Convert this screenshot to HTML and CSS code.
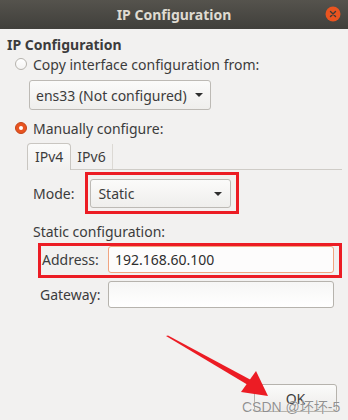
FILE: index.html
```html
<!DOCTYPE html>
<html lang="en">
<head>
    <meta charset="UTF-8">
    <meta name="viewport" content="width=device-width, initial-scale=1.0">
    <title>IP Configuration</title>
    <link rel="stylesheet" href="styles.css">
</head>
<body>

<div class="window">
    <header class="titlebar">
        <span class="title">IP Configuration</span>
        <span class="close">
            <svg width="16" height="16" viewBox="0 0 16 16">
                <circle cx="8" cy="8" r="7.5" fill="#e95420"/>
                <path d="M5.5 5.5 L10.5 10.5 M10.5 5.5 L5.5 10.5" stroke="#3c3b37" stroke-width="1.4" stroke-linecap="round"/>
            </svg>
        </span>
    </header>

    <main class="content">
        <h1 class="heading">IP Configuration</h1>

        <div class="radio-row">
            <span class="radio"></span>
            <span>Copy interface configuration from:</span>
        </div>
        <div class="combo combo-iface">
            <span>ens33 (Not configured)</span>
            <span class="caret"></span>
        </div>

        <div class="radio-row">
            <span class="radio checked"></span>
            <span>Manually configure:</span>
        </div>

        <div class="tabs">
            <span class="tab active">IPv4</span>
            <span class="tab">IPv6</span>
        </div>

        <div class="mode-row">
            <span class="label">Mode:</span>
            <div class="mark mark-mode">
                <div class="combo combo-mode">
                    <span>Static</span>
                    <span class="caret"></span>
                </div>
            </div>
        </div>

        <div class="section-label">Static configuration:</div>

        <div class="field mark mark-address">
            <span class="label label-address">Address:</span>
            <div class="entry focused">192.168.60.100</div>
        </div>
        <div class="field">
            <span class="label label-gateway">Gateway:</span>
            <div class="entry"></div>
        </div>

        <div class="actions">
            <button class="ok">OK</button>
        </div>
    </main>

    <!-- annotation arrow drawn on top of the screenshot -->
    <svg class="note-arrow" width="348" height="420" viewBox="0 0 348 420">
        <polygon points="166,336 168,335.5 251,380 248,385" fill="#ec1c24"/>
        <polygon points="268,396 241,392 256,371" fill="#ec1c24"/>
    </svg>
    <span class="watermark">CSDN @坏坏-5</span>
</div>

</body>
</html>
```

FILE: styles.css
```css
*{
    margin: 0px;
    padding: 0px;
    box-sizing: border-box;
}
body{
    width: 348px;
    height: 420px;
    overflow: hidden;
    background: #f2f1f0;
    font-family: "Noto Sans", "DejaVu Sans", sans-serif;
    font-size: 14px;
    color: #3c3c3c;
}
.window{
    position: relative;
    height: 420px;
}
.titlebar{
    height: 29px;
    background: linear-gradient(#55534d, #403f3b);
    display: flex;
    align-items: center;
    justify-content: center;
    position: relative;
}
.title{
    color: #dfdbd2;
    font-weight: bold;
    font-size: 14px;
}
.close{
    position: absolute;
    right: 7px;
    top: 6px;
    height: 16px;
}
.content{
    padding: 7px 6px 0 7px;
    display: flex;
    flex-direction: column;
}
.heading{
    font-size: 14px;
    font-weight: bold;
    line-height: 18px;
    color: #3c3c3c;
}
.radio-row{
    display: flex;
    align-items: center;
    gap: 6px;
    height: 20px;
    padding-left: 8px;
}
.radio{
    width: 12px;
    height: 12px;
    border-radius: 50%;
    border: 1px solid #b6b3ad;
    background: linear-gradient(#ffffff, #f4f3f2);
}
.radio.checked{
    border-color: #c4461a;
    background: #e95420;
    display: flex;
    align-items: center;
    justify-content: center;
}
.radio.checked::after{
    content: "";
    width: 4px;
    height: 4px;
    border-radius: 50%;
    background: #fff;
}
.combo{
    display: flex;
    align-items: center;
    justify-content: space-between;
    border: 1px solid #bdbab5;
    border-radius: 3px;
    background: linear-gradient(#fbfbfa, #efeeec);
    color: #3c3c3c;
}
.combo-iface{
    width: 182px;
    height: 30px;
    margin: 6px 0 8px 22px;
    padding: 0 7px 0 6px;
}
.caret{
    width: 0;
    height: 0;
    border-left: 4px solid transparent;
    border-right: 4px solid transparent;
    border-top: 4px solid #2e2e2e;
}
.tabs{
    display: flex;
    margin: 5px 0 0 20px;
    height: 27px;
    border-bottom: 1px solid #cfccc7;
}
.tab{
    padding: 0 6px;
    line-height: 25px;
    border-right: 1px solid #dcd9d4;
    margin-top: 1px;
}
.tab.active{
    padding: 0 7px;
    margin-top: 0;
    background: linear-gradient(#fbfbfa, #f1f0ef);
    border: 1px solid #c9c6c1;
    border-bottom: none;
    border-radius: 4px 4px 0 0;
    margin-bottom: -1px;
    line-height: 26px;
}
.mode-row{
    display: flex;
    align-items: center;
    margin: 9px 0 0 26px;
}
.label{
    color: #3c3c3c;
}
.mark{
    position: relative;
}
.mark::after{
    content: "";
    position: absolute;
    border: 3px solid #ec1c24;
}
.mark-mode{
    margin-left: 16px;
}
.mark-mode::after{
    left: -5px;
    right: -8px;
    top: -7px;
    bottom: -6px;
}
.combo-mode{
    width: 141px;
    height: 29px;
    padding: 0 8px 0 7px;
}
.section-label{
    margin: 15px 0 0 26px;
    line-height: 18px;
}
.field{
    display: flex;
    align-items: center;
    margin-left: 33px;
    width: 294px;
}
.mark-address{
    margin-top: 5px;
}
.mark-address::after{
    left: -2px;
    right: -8px;
    top: -3px;
    bottom: -5px;
}
.field + .field{
    margin-top: 8px;
}
.label-address{
    width: 68px;
    padding-left: 2px;
}
.label-gateway{
    width: 68px;
}
.entry{
    flex: 1;
    height: 27px;
    border: 1px solid #b6b3ad;
    border-radius: 3px;
    background: linear-gradient(#f6f6f5, #ffffff);
    padding: 0 6px;
    line-height: 25px;
    color: #2e2e2e;
}
.entry.focused{
    border-color: #f0a480;
    background: #fdfcfc;
}
.actions{
    display: flex;
    justify-content: flex-end;
    margin-top: 76px;
}
.ok{
    width: 83px;
    height: 28px;
    margin-right: 5px;
    border: 1px solid #b6b3ad;
    border-radius: 3px;
    background: linear-gradient(#fbfbfa, #ecebe9);
    font-family: "Noto Sans", "DejaVu Sans", sans-serif;
    font-size: 14px;
    color: #3c3c3c;
}
.note-arrow{
    position: absolute;
    left: 0;
    top: 0;
    pointer-events: none;
}
.watermark{
    position: absolute;
    left: 242px;
    top: 396px;
    font-family: "Liberation Sans", "Noto Sans CJK SC", sans-serif;
    font-size: 14px;
    color: rgba(110, 110, 110, 0.75);
    text-shadow: 0 0 1px #fff;
}
```
